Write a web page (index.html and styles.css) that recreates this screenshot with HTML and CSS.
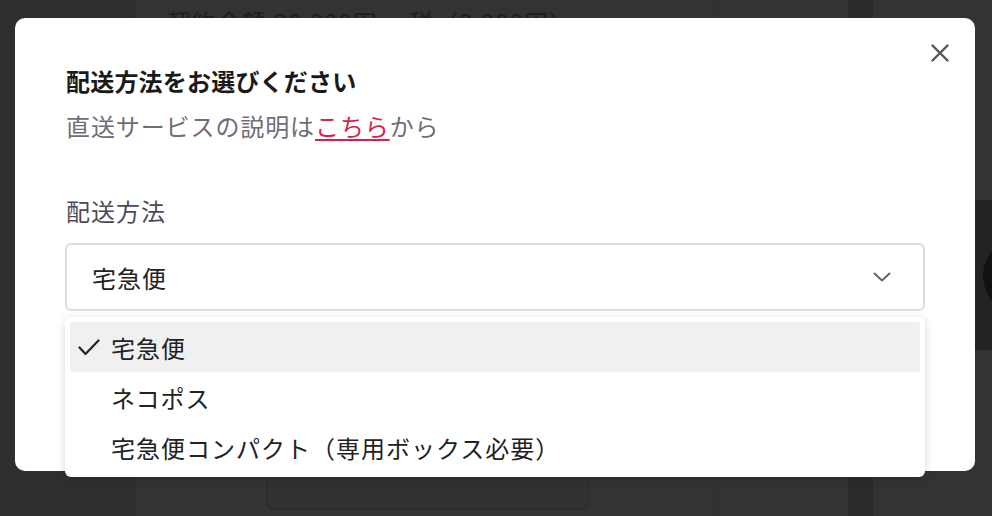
FILE: index.html
```html
<!DOCTYPE html>
<html lang="ja">
<head>
<meta charset="UTF-8">
<title>配送方法の選択</title>
<link rel="stylesheet" href="styles.css">
</head>
<body>
<!-- 後ろのページ（オーバーレイで暗くなっている） -->
<div class="page">
  <aside class="side"></aside>
  <main class="main">
    <div class="contract">契約金額 30,000円 ・税（3,000円）</div>
    <div class="main-box"></div>
  </main>
  <div class="col"></div>
  <div class="strip"></div>
  <div class="right">
    <div class="media"><span class="dot"></span></div>
  </div>
</div>

<!-- 配送方法モーダル -->
<div class="modal">
  <button class="close" type="button" aria-label="閉じる">
    <svg width="18" height="18" viewBox="0 0 18 18"><path d="M1.5 1.5 16.5 16.5M16.5 1.5 1.5 16.5" stroke="#555" stroke-width="2.4" stroke-linecap="round"/></svg>
  </button>

  <h2 class="title">配送方法をお選びください</h2>
  <p class="lead">直送サービスの説明は<a href="#">こちら</a>から</p>

  <label class="label">配送方法</label>
  <div class="select-wrap">
    <div class="select">
      <span>宅急便</span>
      <svg width="18" height="10" viewBox="0 0 18 10"><path d="M1.5 1.5 9 8.5 16.5 1.5" fill="none" stroke="#666" stroke-width="2" stroke-linecap="round" stroke-linejoin="round"/></svg>
    </div>

    <ul class="menu">
      <li class="option selected">
        <span class="check"><svg width="22" height="17" viewBox="0 0 22 17"><path d="M1.5 8.5 7.5 15 20.5 1.5" fill="none" stroke="#222" stroke-width="2.2" stroke-linecap="round" stroke-linejoin="round"/></svg></span>
        宅急便
      </li>
      <li class="option"><span class="check"></span>ネコポス</li>
      <li class="option"><span class="check"></span>宅急便コンパクト（専用ボックス必要）</li>
    </ul>
  </div>
</div>
</body>
</html>
```

FILE: styles.css
```css
/* ページ全体 */
body {
  margin: 0;
  font-family: "Noto Sans CJK JP", "Noto Sans", sans-serif;
  background-color: #333;
  overflow: hidden;
}

/* 後ろのページのカラム */
.page {
  display: grid;
  grid-template-columns: 135px 582px 131px 25px 1fr;
  height: 516px;
}
.side {
  background-color: #2f2f2f;
  border-right: 1px solid #282828;
}
.main {
  display: flex;
  flex-direction: column;
  padding: 6px 0 6px 32px;
}
.contract {
  font-size: 24px;
  line-height: 32px;
  letter-spacing: 1px;
  color: #1e1e1e;
  white-space: nowrap;
}
.main-box {
  margin-top: auto;
  margin-left: 99px;
  width: 321px;
  height: 50px;
  border: 1px solid #2a2a2a;
  border-top: none;
  border-radius: 0 0 8px 8px;
  background-color: #313131;
}
.col {
  border-left: 1px solid #2d2d2d;
}
.strip {
  background-color: #2a2a2a;
}
.right {
  padding-top: 200px;
}
.media {
  height: 150px;
  background-color: #232323;
  position: relative;
  overflow: hidden;
}
.dot {
  position: absolute;
  left: 110px;
  top: 38px;
  width: 76px;
  height: 76px;
  border-radius: 50%;
  background-color: #121212;
}

/* モーダル本体 */
.modal {
  position: fixed;
  left: 15px;
  top: 18px;
  width: 960px;
  height: 453px;
  box-sizing: border-box;
  padding: 45px 50px 0 51px;
  background-color: #fff;
  border-radius: 10px;
}
.close {
  position: absolute;
  top: 26px;
  right: 26px;
  padding: 0;
  border: none;
  background: none;
  display: flex;
}
.title {
  margin: 0;
  font-size: 24px;
  line-height: 36px;
  font-weight: bold;
  letter-spacing: 0.2px;
  color: #1a1a1a;
}
.lead {
  margin: 9px 0 0;
  font-size: 24px;
  line-height: 36px;
  letter-spacing: 0.9px;
  color: #6e6e78;
}
.lead a {
  color: #d81e49;
  text-decoration-thickness: 2px;
  text-underline-offset: 3px;
}
.label {
  display: block;
  margin-top: 49px;
  font-size: 24px;
  line-height: 36px;
  letter-spacing: 1px;
  color: #4c4c58;
}

/* セレクトボックス */
.select-wrap {
  position: relative;
  margin-top: 14px;
  margin-left: -1px;
}
.select {
  display: flex;
  align-items: center;
  justify-content: space-between;
  height: 68px;
  box-sizing: border-box;
  padding: 0 32px 0 25px;
  border: 2px solid #ddd;
  border-radius: 6px;
  font-size: 24px;
  letter-spacing: 1px;
  color: #222;
}

/* 開いているドロップダウン */
.menu {
  position: absolute;
  top: 74px;
  left: 0;
  right: 0;
  margin: 0;
  padding: 5px;
  list-style: none;
  background-color: #fff;
  border-radius: 6px;
  box-shadow: 0 2px 10px rgba(0,0,0,0.15);
}
.option {
  display: flex;
  align-items: center;
  gap: 11px;
  height: 50px;
  padding-left: 8px;
  font-size: 24px;
  letter-spacing: 1px;
  color: #222;
  border-radius: 2px;
}
.option.selected {
  background-color: #f0f0f0;
}
.check {
  width: 22px;
  display: flex;
}
```
